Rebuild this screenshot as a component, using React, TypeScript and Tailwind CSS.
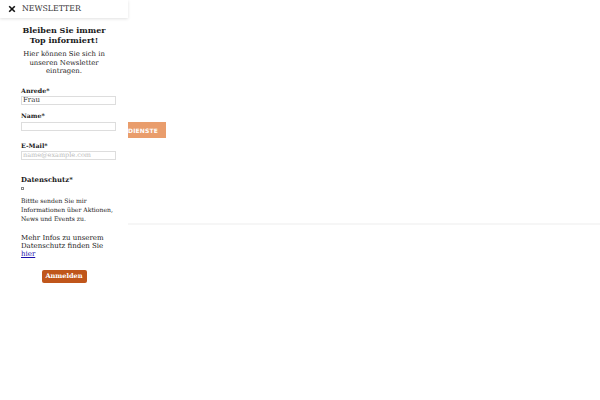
export default function App() {
  return (
    <div className="relative w-[600px] h-[400px] overflow-hidden bg-white font-['DejaVu_Serif',serif]">
      {/* page behind the panel */}
      <div className="pt-[122px]">
        <div className="flex">
          <button className="ml-[100px] w-[66px] h-[16px] bg-[#e99d6c] text-white text-[6px] font-bold font-['DejaVu_Sans',sans-serif] flex items-center justify-end pr-[8px] tracking-wide">
            DIENSTE
          </button>
        </div>
        <div className="mt-[85px] h-[2px] bg-[#f6f6f6]" />
      </div>

      {/* newsletter panel */}
      <aside className="absolute left-0 top-0 w-[128px] h-full bg-white">
        <div className="h-[18px] flex items-center gap-[6px] pl-[8px] shadow-[0_1px_3px_rgba(0,0,0,0.12)]">
          <svg viewBox="0 0 10 10" className="w-[8px] h-[8px] text-[#111]">
            <path d="M1.5 1.5 L8.5 8.5 M8.5 1.5 L1.5 8.5" stroke="currentColor" strokeWidth="2" />
          </svg>
          <span className="text-[7.8px] text-[#333] leading-none">NEWSLETTER</span>
        </div>
        <div className="px-[21px] text-[#1a1a1a] whitespace-nowrap">
          <h2 className="mt-[7px] text-center font-bold text-[8px] leading-[10px]">
            Bleiben Sie immer
            <br />
            Top informiert!
          </h2>
          <p className="mt-[5px] text-center text-[6.9px] leading-[8.5px]">
            Hier können Sie sich in
            <br />
            unseren Newsletter
            <br />
            eintragen.
          </p>

          <label className="block mt-[11.5px] text-[6.3px] font-bold leading-[8px]">Anrede*</label>
          <div className="mt-[1px] h-[9px] w-[95px] border border-[#ddd] text-[7px] leading-[7px] px-[1px] text-[#333]">Frau</div>

          <label className="block mt-[7px] text-[6.3px] font-bold leading-[8px]">Name*</label>
          <div className="mt-[2px] h-[9px] w-[95px] border border-[#ddd]" />

          <label className="block mt-[11px] text-[6.3px] font-bold leading-[8px]">E-Mail*</label>
          <div className="mt-[1px] h-[9px] w-[95px] border border-[#ddd] text-[6.5px] leading-[7px] px-[1px] text-[#bbb]">name@example.com</div>

          <p className="mt-[15.5px] text-[6.9px] font-bold leading-[9px]">Datenschutz*</p>
          <div className="mt-[2.5px] w-[3px] h-[3px] border border-[#888]" />
          <p className="mt-[5.5px] text-[6.1px] leading-[9px]">
            Bittte senden Sie mir
            <br />
            Informationen über Aktionen,
            <br />
            News und Events zu.
          </p>

          <p className="mt-[11.5px] text-[7px] leading-[8px]">
            Mehr Infos zu unserem
            <br />
            Datenschutz finden Sie
            <br />
            <a className="text-[#1a0dab] underline">hier</a>
          </p>

          <div className="mt-[12px] flex justify-center">
            <button className="h-[13px] w-[45px] bg-[#c0561b] text-white text-[6.6px] font-bold rounded-[2px] leading-none">
              Anmelden
            </button>
          </div>
        </div>
      </aside>
    </div>
  );
}
